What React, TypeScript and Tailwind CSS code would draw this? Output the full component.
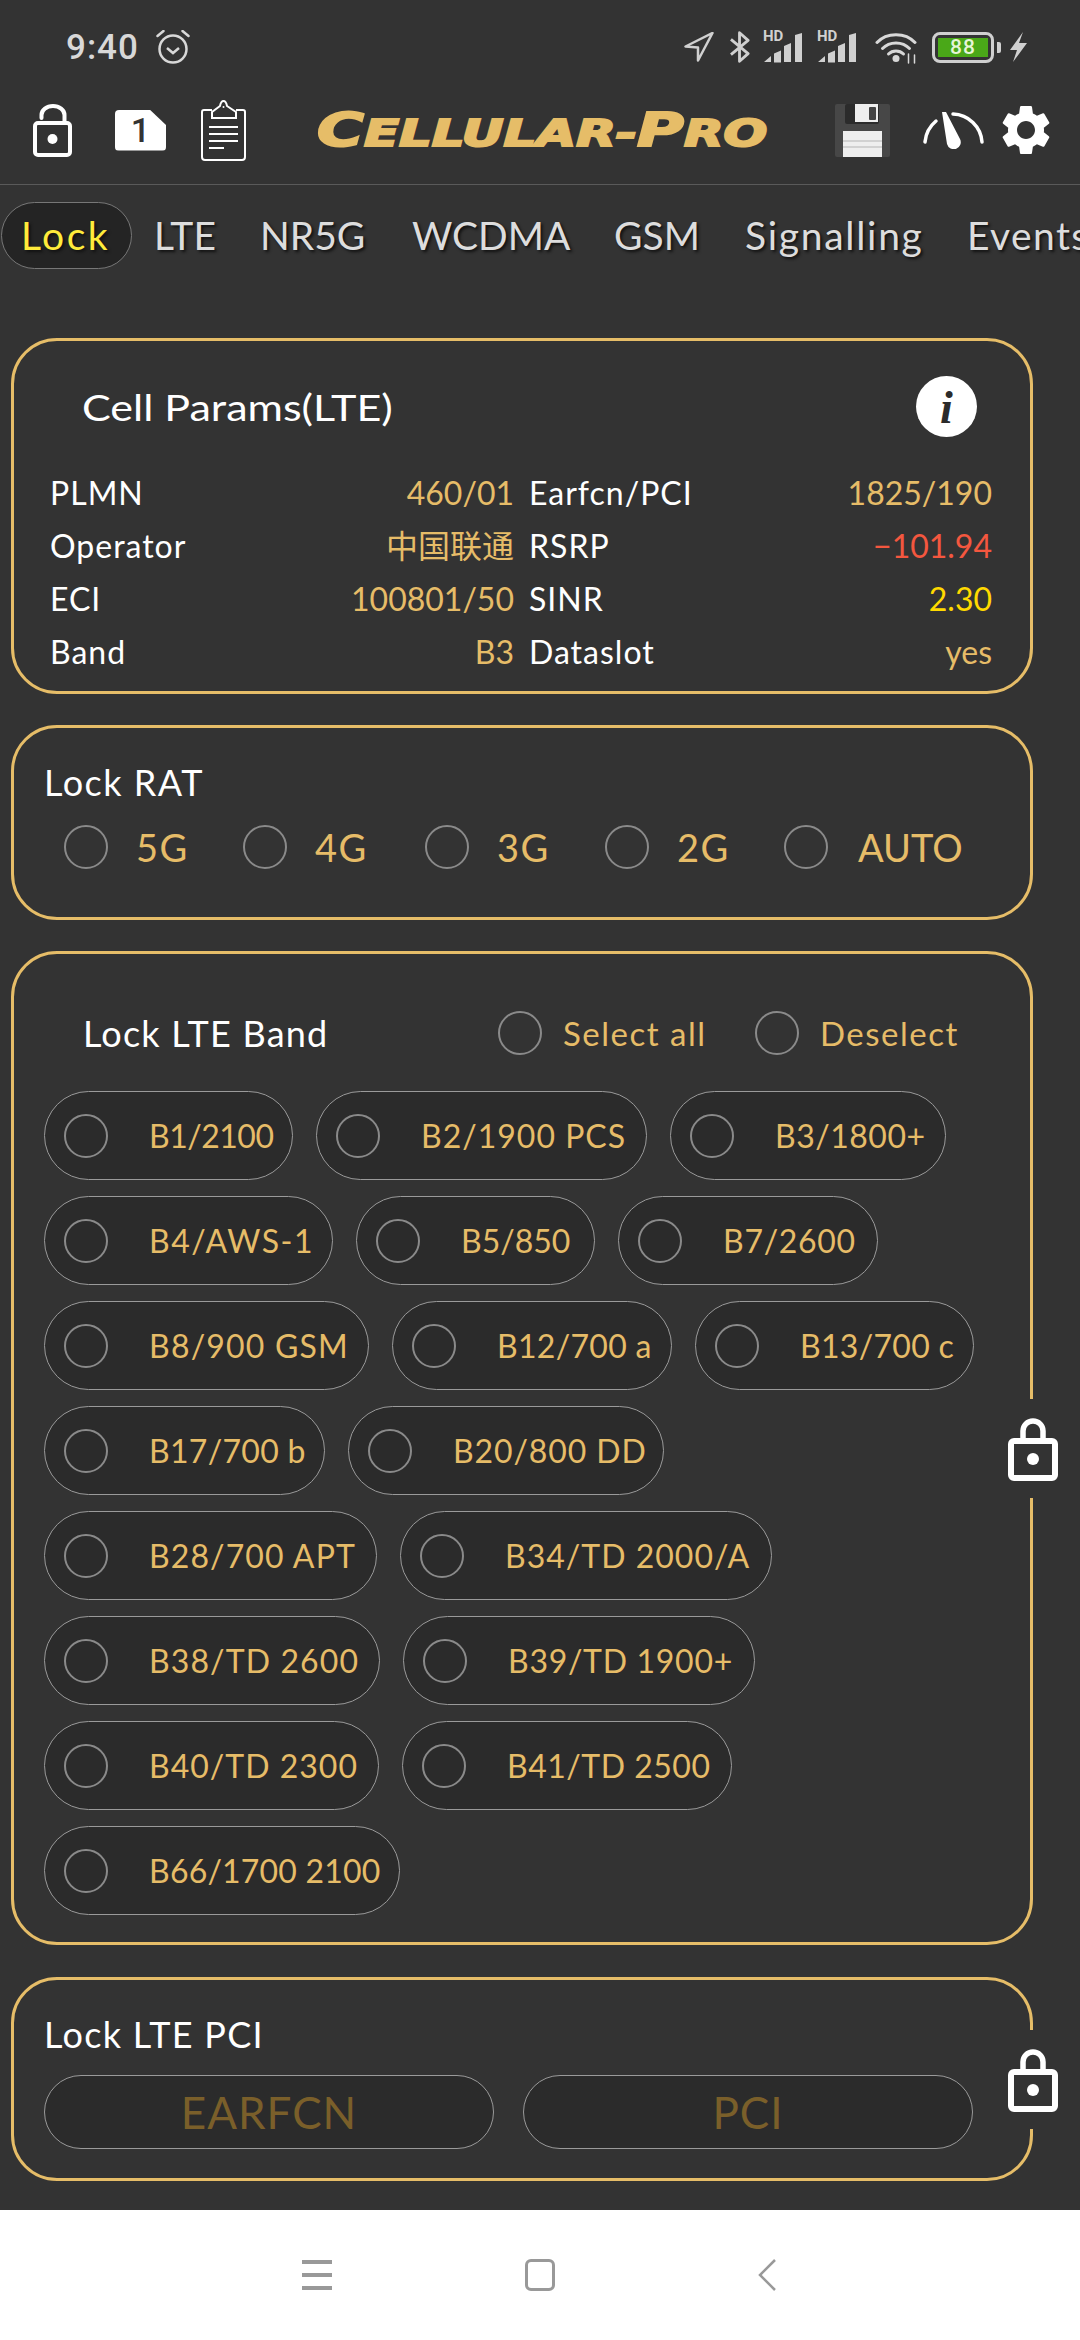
import React from "react";
import { MdSettings } from "react-icons/md";

const tabs = [
  { name: "LTE", w: "w-[106px]" },
  { name: "NR5G", w: "w-[152px]" },
  { name: "WCDMA", w: "w-[202px]" },
  { name: "GSM", w: "w-[131px]" },
  { name: "Signalling", w: "w-[222px] tracking-[1.7px]" },
  { name: "Events", w: "w-[140px] tracking-[1.4px]" },
];

const params = [
  ["PLMN", "460/01", "Earfcn/PCI", "1825/190", "text-[#e6bc68]"],
  ["Operator", "中国联通", "RSRP", "−101.94", "text-[#f4573f]"],
  ["ECI", "100801/50", "SINR", "2.30", "text-[#ffd900]"],
  ["Band", "B3", "Dataslot", "yes", "text-[#e6bc68]"],
];

const rats = [
  { name: "5G", w: "w-[179px] gap-[28px] tracking-[1.5px]" },
  { name: "4G", w: "w-[182px] gap-[28px] tracking-[1.5px]" },
  { name: "3G", w: "w-[180px] gap-[28px] tracking-[1.5px]" },
  { name: "2G", w: "w-[179px] gap-[28px] tracking-[1.5px]" },
  { name: "AUTO", w: "w-[190px] gap-[30px]" },
];

const bands = [
  { name: "B1/2100", w: "w-[249px] tracking-[-0.5px]" },
  { name: "B2/1900 PCS", w: "w-[331px] tracking-[1px]" },
  { name: "B3/1800+", w: "w-[276px] tracking-[0.5px]" },
  { name: "B4/AWS-1", w: "w-[289px] tracking-[1.5px]" },
  { name: "B5/850", w: "w-[239px] tracking-[0px]" },
  { name: "B7/2600", w: "w-[260px] tracking-[0.7px]" },
  { name: "B8/900 GSM", w: "w-[325px] tracking-[1.2px]" },
  { name: "B12/700 a", w: "w-[280px] tracking-[0.3px]" },
  { name: "B13/700 c", w: "w-[279px] tracking-[0.3px]" },
  { name: "B17/700 b", w: "w-[281px] tracking-[0.3px]" },
  { name: "B20/800 DD", w: "w-[316px] tracking-[0.9px]" },
  { name: "B28/700 APT", w: "w-[333px] tracking-[1.1px]" },
  { name: "B34/TD 2000/A", w: "w-[372px] tracking-[1px]" },
  { name: "B38/TD 2600", w: "w-[336px] tracking-[1.1px]" },
  { name: "B39/TD 1900+", w: "w-[352px] tracking-[0.7px]" },
  { name: "B40/TD 2300", w: "w-[335px] tracking-[1px]" },
  { name: "B41/TD 2500", w: "w-[330px] tracking-[0.5px]" },
  { name: "B66/1700 2100", w: "w-[356px] tracking-[0.2px]" },
];

function LockIcon() {
  return (
    <svg width="50" height="65" viewBox="0 0 50 65" fill="none" stroke="#fff">
      <path d="M15 24V15a10 10 0 0 1 20 0v9" strokeWidth="5.5" />
      <rect x="3" y="25" width="44" height="37" rx="3" strokeWidth="6" />
      <circle cx="25" cy="43" r="6" fill="#fff" stroke="none" />
    </svg>
  );
}

function LockBreak({ top }: { top: string }) {
  // lock sits on top of the card border and cuts it
  return (
    <div className={`absolute -right-[30px] ${top} flex h-[99px] w-[55px] items-center justify-center bg-[#333333]`}>
      <LockIcon />
    </div>
  );
}

function Radio() {
  return <span className="block h-[44px] w-[44px] shrink-0 rounded-full border-[2.5px] border-[#8a8a8a]" />;
}

function Signal() {
  return (
    <div className="relative h-[33px] w-[41px]">
      <span className="absolute -top-[3px] left-0 text-[15px] font-bold leading-[16px] text-[#d0d0d0] font-['Roboto',sans-serif]">HD</span>
      <svg className="absolute left-0 top-0" width="41" height="33" viewBox="0 0 41 33" fill="#d0d0d0">
        <path d="M1 31l7-6v6zM11 22.500l7-3v12h-7zM21 15l7-3v19h-7zM32 4l7-2v29h-7z" />
      </svg>
    </div>
  );
}

function StatusBar() {
  return (
    <div className="flex h-[88px] shrink-0 items-center pt-[6px] pl-[66px] pr-[52px] text-[#d8d8d8]">
      <span className="text-[35px] font-medium leading-none tracking-[1px] font-['Roboto',sans-serif]">9:40</span>
      <svg className="ml-[17px]" width="34" height="34" viewBox="0 0 34 34" fill="none" stroke="#d8d8d8">
        <circle cx="17" cy="19" r="13.500" strokeWidth="2.500" />
        <path d="M11 18l6 5 6-5" strokeWidth="2.500" />
        <path d="M1.500 6l6-5M32.500 6l-6-5" strokeWidth="2.500" strokeLinecap="round" />
      </svg>
      <div className="ml-auto flex items-center">
        <svg width="30" height="30" viewBox="0 0 30 30" fill="none" stroke="#d0d0d0" strokeWidth="2.500" strokeLinejoin="round">
          <path d="M28.500 1L1.500 14.500 14 15.500 14 28.500z" />
        </svg>
        <svg className="ml-[16px]" width="20" height="34" viewBox="0 0 21 34" fill="none" stroke="#d0d0d0" strokeWidth="3" strokeLinejoin="round">
          <path d="M1 9l18 15-9 8V2l9 8L1 25" />
        </svg>
        <div className="ml-[13px]">
          <Signal />
        </div>
        <div className="ml-[13px]">
          <Signal />
        </div>
        <svg className="ml-[17px]" width="42" height="33" viewBox="0 0 41 33" fill="none" stroke="#d8d8d8" strokeWidth="3" strokeLinecap="round">
          <path d="M1.500 11.500C11 1 30 1 39.500 11.500" />
          <path d="M7 17.500C14 10 27 10 34 17.500" />
          <path d="M13 23C17 19 24 19 28 23" />
          <circle cx="20.500" cy="27.500" r="3.500" fill="#d8d8d8" stroke="none" />
          <path d="M33 23v9M39 24v8" strokeWidth="1.500" />
        </svg>
        <div className="ml-[15px] flex h-[31px] w-[62px] items-center rounded-[8px] border-[3px] border-[#d0d0d0] p-[3px]">
          <div className="flex h-full w-full items-center justify-center bg-[#4aa818] text-[21px] font-medium leading-none tracking-[1px] text-[#e6f5d8] font-['Roboto',sans-serif]">88</div>
        </div>
        <span className="ml-[3px] h-[11px] w-[4px] rounded-r-[2px] bg-[#d0d0d0]" />
        <svg className="ml-[8px]" width="19" height="30" viewBox="0 0 19 30" fill="#d0d0d0">
          <path d="M14 0L1 18h7l-4 12L18 11h-8z" />
        </svg>
      </div>
    </div>
  );
}

function Logo() {
  return (
    <div className="ml-[71px] h-[48px] w-[448px] shrink-0">
      <div className="origin-left scale-x-[1.39] whitespace-nowrap text-[37px] font-bold italic leading-[48px] text-[#e6bd68] [-webkit-text-stroke:2px_#e6bd68] font-['DejaVu_Sans',sans-serif]">
        <span className="text-[46px]">C</span>ELLULAR-<span className="text-[46px]">P</span>RO
      </div>
    </div>
  );
}

function Header() {
  return (
    <div className="flex h-[96px] shrink-0 items-center pb-[12px] pl-[33px]">
      <svg width="39" height="53" viewBox="0 0 39 53" fill="none" stroke="#fff">
        <path d="M8.500 14V11a11.500 9 0 0 1 23 0v8" strokeWidth="4" strokeLinecap="round" />
        <rect x="2" y="19" width="35" height="32" rx="3" strokeWidth="4" />
        <circle cx="19.500" cy="35" r="5" fill="#fff" stroke="none" />
      </svg>
      <div className="ml-[43px] flex h-[41px] w-[51px] items-center justify-center rounded-[4px] bg-white text-[34px] font-medium leading-none text-[#333333] [clip-path:polygon(0_0,68%_0,100%_38%,100%_100%,0_100%)] font-['Roboto',sans-serif]">
        1
      </div>
      <svg className="ml-[35px]" width="45" height="61" viewBox="0 0 45 61" fill="none" stroke="#fff" strokeWidth="2">
        <path d="M11 10H3Q1 10 1 12V57Q1 60 4 60H41Q44 60 44 57V12Q44 10 42 10H35" />
        <path d="M11 18V12L19 6Q20 1 22.500 1T26 6L35 12V18Z" />
        <path d="M8 27H37M8 34H37M8 41H37M8 48H23" />
        <circle cx="22.500" cy="7" r="1" fill="#fff" stroke="none" />
      </svg>
      <Logo />
      <svg className="ml-[70px]" width="55" height="53" viewBox="0 0 55 53">
        <rect width="55" height="53" rx="2" fill="#474747" />
        <rect x="10" width="34" height="20" rx="2" fill="#2b2b2b" />
        <rect x="20" width="23" height="18" fill="#eeeeee" />
        <rect x="34" y="3" width="7" height="13" rx="1" fill="#444444" />
        <rect x="8" y="27" width="39" height="26" fill="#eeeeee" />
        <path d="M8 37H47M8 43H47" stroke="#c8c8c8" strokeWidth="1.500" />
      </svg>
      <svg className="ml-[33px]" width="61" height="38" viewBox="0 0 61 38" fill="none">
        <path d="M2 31A31 31 0 0 1 13 10M30 3A30 30 0 0 1 59 31" stroke="#fff" strokeWidth="3.500" strokeLinecap="round" />
        <path d="M19 1H23L37 28A7 7 0 1 1 24 33Z" fill="#fff" />
      </svg>
      <MdSettings className="ml-[12px]" size={60} color="#fff" />
    </div>
  );
}

function Tabs() {
  return (
    <div className="mt-[17px] flex h-[67px] shrink-0 items-center overflow-hidden pl-px text-[39px] leading-none [text-shadow:2px_2px_3px_#111]">
      <div className="flex h-[67px] w-[131px] shrink-0 items-center rounded-full border border-[#777777] bg-[#242424] pl-[19px] tracking-[2.5px] text-[#ffeb3b]">
        Lock
      </div>
      <div className="ml-[22px] flex text-[#dddddd]">
        {tabs.map((t) => (
          <div key={t.name} className={`shrink-0 whitespace-nowrap ${t.w}`}>
            {t.name}
          </div>
        ))}
      </div>
    </div>
  );
}

function CellParams() {
  return (
    <div className="h-[356px] rounded-[46px] border-[3px] border-[#e6bd68] pt-[35px]">
      <div className="flex h-[61px] items-center justify-between pl-[68px] pr-[53px]">
        <span className="origin-left scale-x-[1.195] text-[36px] leading-none text-white">Cell Params(LTE)</span>
        <svg width="61" height="61" viewBox="0 0 61 61">
          <circle cx="30.500" cy="30.500" r="30.500" fill="#fff" />
          <text x="30.500" y="47" textAnchor="middle" fontFamily="Liberation Serif" fontStyle="italic" fontWeight="700" fontSize="46" fill="#2b2b2b">i</text>
        </svg>
      </div>
      <div className="mt-[29px] grid grid-cols-[464px_463px] gap-x-[15px] pl-[36px] text-[32px] leading-none">
        {params.map((row) => (
          <React.Fragment key={row[0]}>
            <div className="flex h-[53px] items-center justify-between">
              <span className="tracking-[1px] text-white">{row[0]}</span>
              <span className="text-[#e6bc68]">{row[1]}</span>
            </div>
            <div className="flex h-[53px] items-center justify-between">
              <span className="tracking-[1px] text-white">{row[2]}</span>
              <span className={row[4]}>{row[3]}</span>
            </div>
          </React.Fragment>
        ))}
      </div>
    </div>
  );
}

function LockRat() {
  return (
    <div className="mt-[31px] h-[195px] rounded-[46px] border-[3px] border-[#e6bd68] pt-[34px] pl-[30px]">
      <div className="h-[40px] text-[36px] leading-[40px] tracking-[1.5px] text-white">Lock RAT</div>
      <div className="mt-[23px] flex pl-[20px]">
        {rats.map((r) => (
          <div key={r.name} className={`flex items-center ${r.w}`}>
            <Radio />
            <span className="text-[38px] leading-none text-[#e6bc68]">{r.name}</span>
          </div>
        ))}
      </div>
    </div>
  );
}

function LockBand() {
  return (
    <div className="relative mt-[31px] h-[994px] rounded-[46px] border-[3px] border-[#e6bd68] pt-[57px]">
      <div className="flex h-[44px] items-center pl-[69px]">
        <span className="w-[415px] text-[36px] leading-none tracking-[1.200px] text-white">Lock LTE Band</span>
        <Radio />
        <span className="ml-[21px] w-[192px] text-[33px] leading-none tracking-[1.500px] text-[#e6bc68]">Select all</span>
        <Radio />
        <span className="ml-[21px] text-[33px] leading-none tracking-[1.500px] text-[#e6bc68]">Deselect</span>
      </div>
      <div className="mt-[36px] flex flex-wrap gap-x-[23px] gap-y-[16px] pl-[30px] pr-[30px]">
        {bands.map((b) => (
          <div
            key={b.name}
            className={`flex h-[89px] items-center gap-[41px] rounded-full border border-[#9a9a9a] bg-[#2b2b2b] pl-[19px] ${b.w}`}
          >
            <Radio />
            <span className="whitespace-nowrap text-[32px] leading-none text-[#e6bc68]">{b.name}</span>
          </div>
        ))}
      </div>
      <LockBreak top="top-[445px]" />
    </div>
  );
}

function LockPci() {
  return (
    <div className="relative mt-[32px] h-[204px] rounded-[46px] border-[3px] border-[#e6bd68] pt-[34px] pl-[30px]">
      <div className="h-[40px] text-[36px] leading-[40px] tracking-[1.300px] text-white">Lock LTE PCI</div>
      <div className="mt-[21px] flex gap-[29px]">
        {["EARFCN", "PCI"].map((t) => (
          <div
            key={t}
            className="flex h-[74px] w-[450px] items-center justify-center rounded-full border border-[#9a9a9a] bg-[#2b2b2b] text-[44px] leading-none tracking-[1px] text-[#7a5f2a]"
          >
            {t}
          </div>
        ))}
      </div>
      <LockBreak top="top-[50px]" />
    </div>
  );
}

function NavBar() {
  return (
    <div className="mt-auto flex h-[130px] shrink-0 items-center bg-white pl-[302px]">
      <div className="flex w-[30px] flex-col gap-[9px]">
        <span className="h-[4px] bg-[#999999]" />
        <span className="h-[4px] bg-[#999999]" />
        <span className="h-[4px] bg-[#999999]" />
      </div>
      <span className="ml-[193px] h-[32px] w-[30px] rounded-[6px] border-[3px] border-[#999999]" />
      <svg className="ml-[203px]" width="18" height="32" viewBox="0 0 18 32" fill="none" stroke="#999999" strokeWidth="2.500">
        <path d="M17 1L2 16l15 15" />
      </svg>
    </div>
  );
}

export default function App() {
  return (
    <div className="flex h-[2340px] w-[1080px] flex-col overflow-hidden bg-[#333333] font-['Lato','Noto_Sans_CJK_SC',sans-serif]">
      <StatusBar />
      <Header />
      <div className="h-px shrink-0 bg-[#5a5a5a]" />
      <Tabs />
      <main className="mt-[69px] ml-[11px] w-[1022px]">
        <CellParams />
        <LockRat />
        <LockBand />
        <LockPci />
      </main>
      <NavBar />
    </div>
  );
}
